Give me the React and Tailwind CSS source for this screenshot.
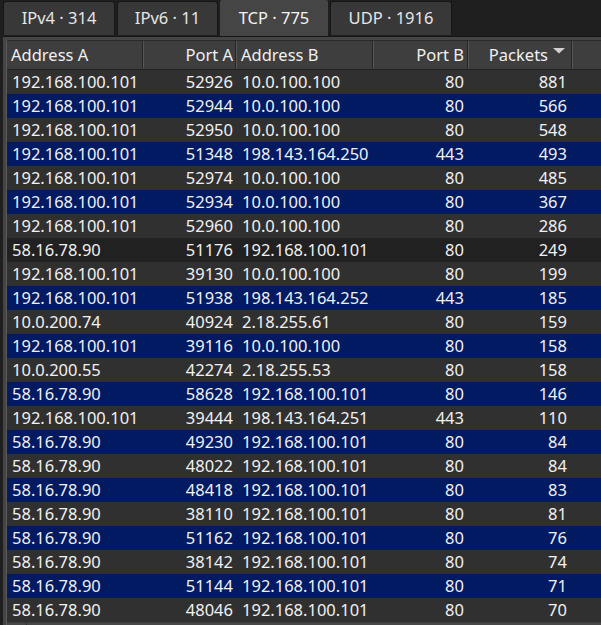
import React from "react";

const rows = [
  ["192.168.100.101", "52926", "10.0.100.100", "80", "881", "g"],
  ["192.168.100.101", "52944", "10.0.100.100", "80", "566", "b"],
  ["192.168.100.101", "52950", "10.0.100.100", "80", "548", "g"],
  ["192.168.100.101", "51348", "198.143.164.250", "443", "493", "b"],
  ["192.168.100.101", "52974", "10.0.100.100", "80", "485", "g"],
  ["192.168.100.101", "52934", "10.0.100.100", "80", "367", "b"],
  ["192.168.100.101", "52960", "10.0.100.100", "80", "286", "g"],
  ["58.16.78.90", "51176", "192.168.100.101", "80", "249", "d"],
  ["192.168.100.101", "39130", "10.0.100.100", "80", "199", "g"],
  ["192.168.100.101", "51938", "198.143.164.252", "443", "185", "b"],
  ["10.0.200.74", "40924", "2.18.255.61", "80", "159", "g"],
  ["192.168.100.101", "39116", "10.0.100.100", "80", "158", "b"],
  ["10.0.200.55", "42274", "2.18.255.53", "80", "158", "g"],
  ["58.16.78.90", "58628", "192.168.100.101", "80", "146", "b"],
  ["192.168.100.101", "39444", "198.143.164.251", "443", "110", "g"],
  ["58.16.78.90", "49230", "192.168.100.101", "80", "84", "b"],
  ["58.16.78.90", "48022", "192.168.100.101", "80", "84", "g"],
  ["58.16.78.90", "48418", "192.168.100.101", "80", "83", "b"],
  ["58.16.78.90", "38110", "192.168.100.101", "80", "81", "g"],
  ["58.16.78.90", "51162", "192.168.100.101", "80", "76", "b"],
  ["58.16.78.90", "38142", "192.168.100.101", "80", "74", "g"],
  ["58.16.78.90", "51144", "192.168.100.101", "80", "71", "b"],
  ["58.16.78.90", "48046", "192.168.100.101", "80", "70", "g"],
];

const bg = { g: "bg-[#303030]", b: "bg-[#011a62]", d: "bg-[#212121]" };

function Tab({ label, active, w }) {
  if (active) {
    return (
      <div className={`${w} h-[36px] -mb-[1px] flex items-center justify-center bg-[#454545] rounded-t-[2px] text-[#f2f2f2]`}>
        {label}
      </div>
    );
  }
  return (
    <div className={`${w} h-[34px] mt-[1px] flex items-center justify-center bg-[#383838] border border-[#161616] border-b-0 rounded-t-[3px] text-[#e6e6e6]`}>
      {label}
    </div>
  );
}

function HCell({ w, children, right, extra = "" }) {
  return (
    <div
      className={`${w} h-full shrink-0 flex items-center border-r border-[#262626] shadow-[1px_0_0_#575757] ${right ? "justify-end" : ""} ${extra}`}
    >
      {children}
    </div>
  );
}

export default function App() {
  return (
    <div
      className="w-[601px] h-[625px] overflow-hidden bg-[#1f1f1f] text-[16.5px] leading-none text-[#f0f0f0] flex flex-col"
      style={{ fontFamily: '"Noto Sans", "Open Sans", sans-serif' }}
    >
      {/* tab bar */}
      <div className="h-[36px] shrink-0 flex items-start pl-[3px] gap-[2px] relative z-10">
        <Tab label="IPv4 · 314" w="w-[112px]" />
        <Tab label="IPv6 · 11" w="w-[101px]" />
        <Tab label="TCP · 775" w="w-[108px]" active />
        <Tab label="UDP · 1916" w="w-[122px]" />
      </div>

      {/* panel */}
      <div className="flex-1 flex flex-col ml-[3px] bg-[#454545] border-t border-[#161616] min-h-0">
        <div className="h-[3px] shrink-0" />
        <div className="flex-1 flex flex-col ml-[3px] bg-[#2a2a2a] border-l border-[#5a5a5a] min-h-0">
          {/* header */}
          <div className="h-[30px] shrink-0 flex bg-[#3e3e3e] border-t border-[#2a2a2a] border-b border-b-[#232323]">
            <HCell w="w-[136px]" extra="pl-[4px]">Address A</HCell>
            <HCell w="w-[93px]" right extra="pr-[2px]">Port A</HCell>
            <HCell w="w-[137px]" extra="pl-[5px]">Address B</HCell>
            <HCell w="w-[95px]" right extra="pr-[3px]">Port B</HCell>
            <HCell w="w-[104px]" right extra="pr-[6px]">
              <span>Packets</span>
              <svg width="12" height="6" viewBox="0 0 12 6" className="ml-[5px] mb-[8px]">
                <path d="M0 0 L12 0 L6 5.5 Z" fill="#d0d0d0" />
              </svg>
            </HCell>
            <div className="flex-1" />
          </div>

          {/* rows */}
          <div className="flex flex-col">
            {rows.map((r, i) => (
              <div key={i} className={`h-[24px] shrink-0 flex items-center ${bg[r[5]]}`}>
                <div className="w-[136px] shrink-0 pl-[5px]">{r[0]}</div>
                <div className="w-[93px] shrink-0 text-right pr-[3px]">{r[1]}</div>
                <div className="w-[137px] shrink-0 pl-[6px]">{r[2]}</div>
                <div className="w-[95px] shrink-0 text-right pr-[4px]">{r[3]}</div>
                <div className="w-[104px] shrink-0 text-right pr-[5px]">{r[4]}</div>
                <div className="flex-1" />
              </div>
            ))}
          </div>

          {/* horizontal scrollbar */}
          <div className="flex-1 flex bg-[#484848] border-t border-[#3a3a3a]">
            <div className="w-[20px] border-r border-[#2e2e2e]" />
          </div>
        </div>
      </div>
    </div>
  );
}
